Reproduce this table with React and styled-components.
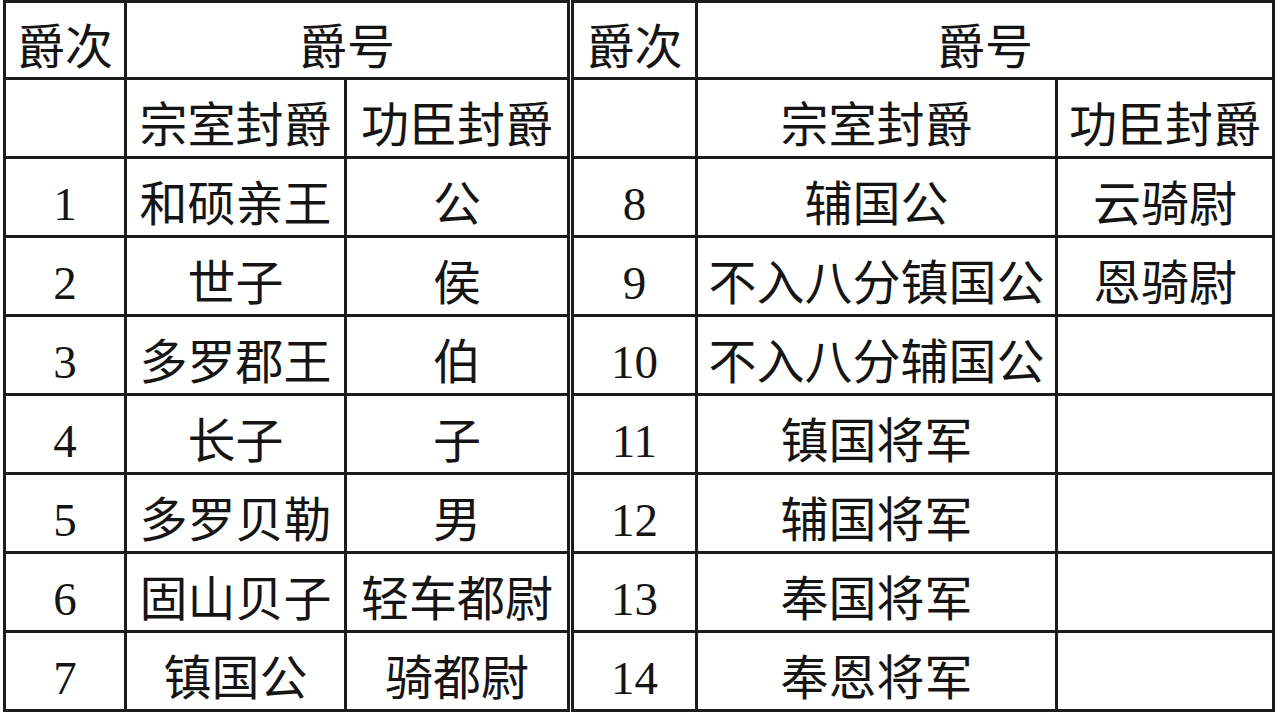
import React from "react";
import styled, { createGlobalStyle } from "styled-components";

const Global = createGlobalStyle`
  html, body { margin: 0; padding: 0; background: #ffffff; }
  body { font-family: "Noto Sans CJK SC", "Noto Sans", sans-serif; color: #151515; }
`;

const Page = styled.div`
  display: flex;
  gap: 1px;
  padding: 0 0 0 3px;
  width: 1280px;
  height: 720px;
  box-sizing: border-box;
  align-items: flex-start;
`;

const Grid = styled.div`
  display: grid;
  grid-template-columns: ${(p) => p.$cols};
  grid-template-rows: 74px repeat(8, 76px);
  gap: 3px;
  padding: 3px;
  background: #1c1c1c;
`;

const Cell = styled.div`
  background: #ffffff;
  display: flex;
  align-items: center;
  justify-content: center;
  grid-column: ${(p) => (p.$span ? `span ${p.$span}` : "auto")};
  font-family: ${(p) =>
    p.$num
      ? '"Liberation Serif", "Noto Sans CJK SC", serif'
      : '"Noto Sans CJK SC", "Noto Sans", sans-serif'};
  font-size: ${(p) => (p.$num ? "47px" : "48px")};
  line-height: 1;
  padding-top: ${(p) => (p.$num ? "14px" : "6px")};
  box-sizing: border-box;
  white-space: nowrap;
  font-weight: 400;
`;

const left = {
  cols: "118px 217px 220px",
  rows: [
    ["1", "和硕亲王", "公"],
    ["2", "世子", "侯"],
    ["3", "多罗郡王", "伯"],
    ["4", "长子", "子"],
    ["5", "多罗贝勒", "男"],
    ["6", "固山贝子", "轻车都尉"],
    ["7", "镇国公", "骑都尉"],
  ],
};

const right = {
  cols: "121px 357px 214px",
  rows: [
    ["8", "辅国公", "云骑尉"],
    ["9", "不入八分镇国公", "恩骑尉"],
    ["10", "不入八分辅国公", ""],
    ["11", "镇国将军", ""],
    ["12", "辅国将军", ""],
    ["13", "奉国将军", ""],
    ["14", "奉恩将军", ""],
  ],
};

function RankTable({ data }) {
  return (
    <Grid $cols={data.cols}>
      <Cell>爵次</Cell>
      <Cell $span={2}>爵号</Cell>
      <Cell />
      <Cell>宗室封爵</Cell>
      <Cell>功臣封爵</Cell>
      {data.rows.map(([n, a, b]) => (
        <React.Fragment key={n}>
          <Cell $num>{n}</Cell>
          <Cell>{a}</Cell>
          <Cell>{b}</Cell>
        </React.Fragment>
      ))}
    </Grid>
  );
}

export default function App() {
  return (
    <>
      <Global />
      <Page>
        <RankTable data={left} />
        <RankTable data={right} />
      </Page>
    </>
  );
}
